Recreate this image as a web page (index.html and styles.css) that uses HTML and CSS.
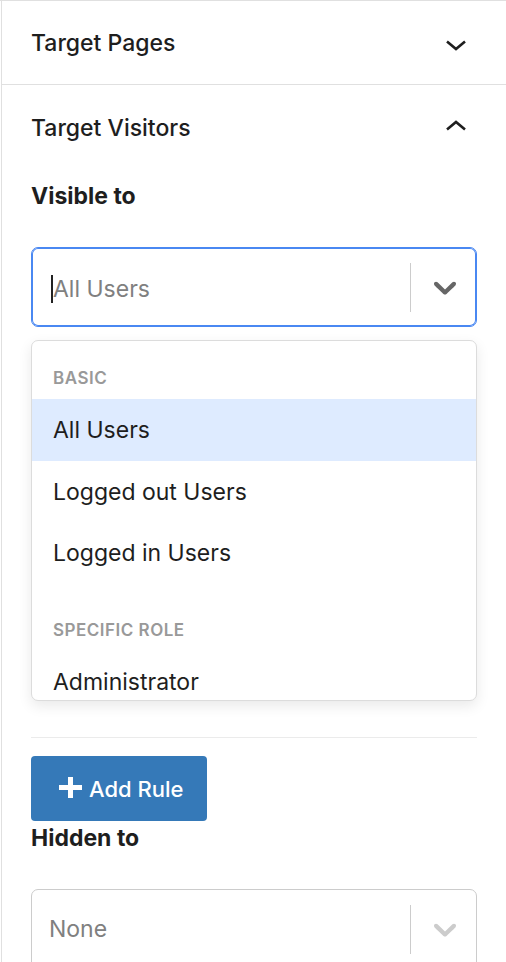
FILE: index.html
```html
<!DOCTYPE html>
<html lang="en">
<head>
<meta charset="utf-8">
<title>Target Visitors</title>
<link rel="stylesheet" href="styles.css">
</head>
<body>
<div class="frame">
  <div class="panel">
    <section class="section">
      <div class="section__header">
        <span class="section__title">Target Pages</span>
        <svg class="section__chevron" width="24" height="24" viewBox="0 0 24 24"><polyline points="3,10.5 12,18 21,10.5" fill="none" stroke="#1e1e1e" stroke-width="2.6"/></svg>
      </div>
    </section>
    <section class="section section--open">
      <div class="section__header">
        <span class="section__title">Target Visitors</span>
        <svg class="section__chevron" width="24" height="24" viewBox="0 0 24 24"><polyline points="3,14.5 12,7 21,14.5" fill="none" stroke="#1e1e1e" stroke-width="2.6"/></svg>
      </div>
      <div class="section__body">
        <div class="field-label">Visible to</div>
        <div class="select select--focused">
          <div class="select__value"><span class="select__caret"></span><span class="select__text">All Users</span></div>
          <span class="select__sep"></span>
          <div class="select__indicator">
            <svg width="38" height="38" viewBox="0 0 20 20"><path fill="#666" d="M4.516 7.548c0.436-0.446 1.043-0.481 1.576 0l3.908 3.747 3.908-3.747c0.533-0.481 1.141-0.446 1.574 0 0.436 0.445 0.408 1.197 0 1.615-0.406 0.418-4.695 4.502-4.695 4.502-0.217 0.223-0.502 0.335-0.787 0.335s-0.57-0.112-0.789-0.335c0 0-4.287-4.084-4.695-4.502s-0.436-1.170 0-1.615z"/></svg>
          </div>
        </div>
        <div class="menu">
          <div class="menu__list">
            <div class="menu__group">
              <div class="menu__heading">Basic</div>
              <div class="menu__option menu__option--active">All Users</div>
              <div class="menu__option">Logged out Users</div>
              <div class="menu__option">Logged in Users</div>
            </div>
            <div class="menu__group">
              <div class="menu__heading">Specific Role</div>
              <div class="menu__option">Administrator</div>
            </div>
          </div>
        </div>
        <hr class="divider">
        <button class="btn-add" type="button">
          <svg class="btn-add__icon" width="23" height="21" viewBox="0 0 23 21"><rect x="0" y="8" width="23" height="5" fill="#fff"/><rect x="9" y="0" width="5" height="21" fill="#fff"/></svg>
          <span>Add Rule</span>
        </button>
        <div class="field-label">Hidden to</div>
        <div class="select">
          <div class="select__value"><span class="select__text">None</span></div>
          <span class="select__sep"></span>
          <div class="select__indicator">
            <svg width="38" height="38" viewBox="0 0 20 20"><path fill="#ccc" d="M4.516 7.548c0.436-0.446 1.043-0.481 1.576 0l3.908 3.747 3.908-3.747c0.533-0.481 1.141-0.446 1.574 0 0.436 0.445 0.408 1.197 0 1.615-0.406 0.418-4.695 4.502-4.695 4.502-0.217 0.223-0.502 0.335-0.787 0.335s-0.57-0.112-0.789-0.335c0 0-4.287-4.084-4.695-4.502s-0.436-1.170 0-1.615z"/></svg>
          </div>
        </div>
      </div>
    </section>
  </div>
</div>
</body>
</html>
```

FILE: styles.css
```css
html, body {
  margin: 0;
  padding: 0;
  background: #fff;
}

body {
  font-family: Inter, "Noto Sans", "Liberation Sans", sans-serif;
  color: #1e1e1e;
  overflow: hidden;
}

.frame {
  border-top: 1px solid #e0e0e0;
  height: 961px;
}

.panel {
  margin-left: 1px;
  border-left: 1px solid #e0e0e0;
  height: 100%;
}

.section {
  border-bottom: 1px solid #e0e0e0;
}

.section--open {
  border-bottom: none;
}

.section__header {
  height: 83px;
  display: flex;
  align-items: center;
  justify-content: space-between;
  padding: 0 38px 0 29px;
}

.section--open .section__header {
  height: 84px;
}

.section__title {
  font-size: 23px;
  font-weight: 500;
  line-height: 28px;
  padding-top: 1px;
}

.section__chevron {
  display: block;
  flex: none;
}

.section__body {
  padding: 10px 29px 0 29px;
}

.field-label {
  font-size: 23px;
  font-weight: 700;
  line-height: 34px;
  margin-bottom: 34px;
}

.select {
  height: 80px;
  box-sizing: border-box;
  border: 1px solid #cccccc;
  border-radius: 7px;
  display: flex;
  align-items: stretch;
  background: #fff;
}

.select--focused {
  border-color: #4a88f2;
  box-shadow: inset 0 0 0 1px #4a88f2;
}

.select__value {
  flex: 1;
  display: flex;
  align-items: center;
  padding-left: 17px;
  font-size: 23px;
  line-height: 28px;
  color: #808080;
}

.select--focused .select__value {
  padding-top: 4px;
}

.select__caret {
  width: 2px;
  height: 28px;
  background: #222;
  margin-left: 2px;
}

.select__sep {
  width: 1px;
  background: #cccccc;
  margin: 15px 0 14px 0;
}

.select__indicator {
  width: 65px;
  display: flex;
  align-items: center;
  justify-content: center;
}

.select__indicator svg {
  display: block;
  margin-left: 2px;
}

.menu {
  margin-top: 13px;
  height: 361px;
  box-sizing: border-box;
  border: 1px solid #dcdcdc;
  border-radius: 7px;
  box-shadow: 0 5px 14px rgba(0, 0, 0, 0.09);
  overflow: hidden;
  background: #fff;
}

.menu__list {
  padding-top: 9px;
}

.menu__group {
  padding: 18px 0;
}

.menu__heading {
  font-size: 17px;
  font-weight: 600;
  line-height: 20px;
  letter-spacing: 0.5px;
  text-transform: uppercase;
  color: #999999;
  padding: 0 21px;
  margin-bottom: 11px;
}

.menu__option {
  font-size: 23px;
  line-height: 27.5px;
  padding: 18px 21px 16px 21px;
  color: #1e1e1e;
}

.menu__option--active {
  background: #deebff;
}

.divider {
  margin: 36px 0 0 0;
  border: none;
  border-top: 1px solid #ebebeb;
  height: 0;
}

.btn-add {
  margin-top: 18px;
  height: 65px;
  display: inline-flex;
  align-items: center;
  gap: 7px;
  padding: 0 24px 0 28px;
  border: none;
  border-radius: 4px;
  background: #3579b8;
  color: #fff;
  font-family: inherit;
  font-size: 22px;
  font-weight: 500;
  line-height: 28px;
}

.btn-add__icon {
  display: block;
  margin-top: -2px;
}
```
